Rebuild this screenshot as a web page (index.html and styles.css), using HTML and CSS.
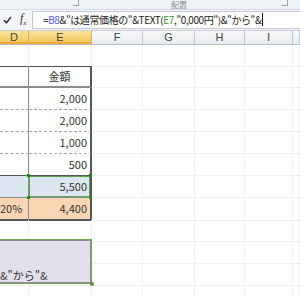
FILE: index.html
```html
<!DOCTYPE html>
<html lang="ja">
<head>
  <meta charset="UTF-8">
  <title>Excel TEXT関数</title>
  <link rel="stylesheet" href="styles.css">
</head>
<body>
<div class="window">
  <div class="ribbon">
    <span class="launcher launcher-left"></span>
    <span class="group-label">配置</span>
    <span class="launcher launcher-right"></span>
  </div>

  <div class="formula-bar">
    <div class="fx-buttons">
      <svg class="check" width="9" height="8" viewBox="0 0 9 8">
        <path d="M1 4.2 L3.4 6.8 L8 1" fill="none" stroke="#3a3a3a" stroke-width="1.6"/>
      </svg>
      <span class="fx">f<sub>x</sub></span>
    </div>
    <div class="formula-input">
      =<span class="ref-b">B8</span>&amp;"は通常価格の"&amp;TEXT(<span class="ref-e">E7</span>,"0,000円")&amp;"から"&amp;<span class="caret"></span>
    </div>
  </div>

  <div class="col-headers">
    <div class="col-head selected">D</div>
    <div class="col-head selected">E</div>
    <div class="col-head">F</div>
    <div class="col-head">G</div>
    <div class="col-head">H</div>
    <div class="col-head">I</div>
    <div class="col-head"></div>
  </div>

  <div class="sheet">
    <div class="row">
      <div class="cell"></div><div class="cell"></div><div class="cell"></div><div class="cell"></div><div class="cell"></div><div class="cell"></div><div class="cell"></div>
    </div>
    <div class="row t-head">
      <div class="cell d"></div><div class="cell e center">金額</div><div class="cell"></div><div class="cell"></div><div class="cell"></div><div class="cell"></div><div class="cell"></div>
    </div>
    <div class="row t-row">
      <div class="cell d"></div><div class="cell e">2,000</div><div class="cell"></div><div class="cell"></div><div class="cell"></div><div class="cell"></div><div class="cell"></div>
    </div>
    <div class="row t-row">
      <div class="cell d"></div><div class="cell e">2,000</div><div class="cell"></div><div class="cell"></div><div class="cell"></div><div class="cell"></div><div class="cell"></div>
    </div>
    <div class="row t-row">
      <div class="cell d"></div><div class="cell e">1,000</div><div class="cell"></div><div class="cell"></div><div class="cell"></div><div class="cell"></div><div class="cell"></div>
    </div>
    <div class="row t-row last">
      <div class="cell d"></div><div class="cell e">500</div><div class="cell"></div><div class="cell"></div><div class="cell"></div><div class="cell"></div><div class="cell"></div>
    </div>
    <div class="row t-total">
      <div class="cell d"></div><div class="cell e active">5,500<i class="h tl"></i><i class="h tr"></i><i class="h bl"></i><i class="h br"></i></div><div class="cell"></div><div class="cell"></div><div class="cell"></div><div class="cell"></div><div class="cell"></div>
    </div>
    <div class="row t-sale">
      <div class="cell d">20%</div><div class="cell e">4,400</div><div class="cell"></div><div class="cell"></div><div class="cell"></div><div class="cell"></div><div class="cell"></div>
    </div>
    <div class="row">
      <div class="cell"></div><div class="cell"></div><div class="cell"></div><div class="cell"></div><div class="cell"></div><div class="cell"></div><div class="cell"></div>
    </div>
    <div class="row">
      <div class="cell"></div><div class="cell"></div><div class="cell"></div><div class="cell"></div><div class="cell"></div><div class="cell"></div><div class="cell"></div>
    </div>
    <div class="row">
      <div class="cell"></div><div class="cell"></div><div class="cell"></div><div class="cell"></div><div class="cell"></div><div class="cell"></div><div class="cell"></div>
    </div>
    <div class="row">
      <div class="cell"></div><div class="cell"></div><div class="cell"></div><div class="cell"></div><div class="cell"></div><div class="cell"></div><div class="cell"></div>
    </div>

    <!-- テキストボックス (セルの上に重なる) -->
    <div class="textbox">
      <div class="textbox-inner">&amp;"から"&amp;</div>
      <i class="tb-handle"></i>
    </div>
  </div>
</div>
</body>
</html>
```

FILE: styles.css
```css
body {
  margin: 0;
  padding: 0;
  background: #fff;
  font-family: "Noto Sans CJK JP", "Liberation Sans", sans-serif;
  color: #222;
}

.window {
  width: 300px;
  height: 296px;
  overflow: hidden;
}

/* リボン下端 */
.ribbon {
  height: 9px;
  background: #eef1f5;
  border-bottom: 1px solid #d6dbe2;
  display: flex;
  align-items: flex-start;
  overflow: hidden;
}

.group-label {
  margin-left: 92px;
  font-size: 8px;
  line-height: 9px;
  color: #8a8f98;
}

.launcher {
  width: 5px;
  height: 5px;
  border-right: 1px solid #9aa0a8;
  border-bottom: 1px solid #9aa0a8;
}

.launcher-left {
  margin-left: 73px;
}

.launcher-right {
  margin-left: 95px;
}

/* 数式バー */
.formula-bar {
  height: 20px;
  display: flex;
  background: #f3f5f8;
  border-bottom: 1px solid #c9ced6;
}

.fx-buttons {
  width: 32px;
  display: flex;
  align-items: center;
  gap: 8px;
  padding-left: 3px;
  box-sizing: border-box;
}

.fx {
  font-family: "Liberation Serif", serif;
  font-style: italic;
  font-size: 12px;
  color: #333;
  line-height: 1;
}

.fx sub {
  font-size: 7px;
}

.formula-input {
  flex: 1;
  background: #fff;
  border: 1px solid #c4c9d0;
  border-right: none;
  margin: 1px 0;
  padding-left: 10px;
  font-size: 10px;
  line-height: 16px;
  white-space: nowrap;
  color: #222;
  letter-spacing: -0.4px;
}

.ref-b {
  color: #5555ff;
}

.ref-e {
  color: #3d9b35;
}

.caret {
  display: inline-block;
  width: 1px;
  height: 13px;
  margin-left: 1px;
  background: #000;
  vertical-align: -2px;
}

/* 列見出し */
.col-headers {
  display: grid;
  grid-template-columns: 29px 63px 51px 52px 50px 48px 1fr;
  height: 13px;
  background: linear-gradient(#f8f9fa, #e7eaee);
  border-bottom: 1px solid #b8bec6;
}

.col-head {
  border-right: 1px solid #c3c8cf;
  font-family: "Liberation Sans", sans-serif;
  font-size: 11px;
  line-height: 13px;
  text-align: center;
  color: #444;
}

.col-head.selected {
  background: linear-gradient(#fbe39a, #f3c862);
  border-bottom: 2px solid #f2a73a;
  border-right-color: #e2b25a;
  height: 11px;
}

/* シート */
.sheet {
  position: relative;
}

.row {
  display: grid;
  grid-template-columns: 29px 63px 51px 52px 50px 48px 1fr;
  height: 22px;
}

.cell {
  border-right: 1px solid #f1f1f1;
  border-bottom: 1px solid #f1f1f1;
  font-size: 11px;
  line-height: 21px;
  text-align: right;
  padding-right: 3px;
  white-space: nowrap;
  color: #333;
}

.cell.center {
  text-align: center;
  padding-right: 0;
}

.cell.d {
  border-right: 1px solid #8c8c8c;
}

.cell.e {
  border-right: 2px solid #555;
}

.t-head .cell.d,
.t-head .cell.e {
  border-top: 1px solid #555;
  border-bottom: 2px solid #8c8c8c;
  line-height: 19px;
}

.row.t-head {
  margin-top: -1px;
}

.t-row .cell.d,
.t-row .cell.e {
  border-bottom: 1px dashed #a8a8a8;
}

.t-row.last .cell.d,
.t-row.last .cell.e {
  border-bottom: 1px solid #555;
}

.t-total .cell.d,
.t-total .cell.e {
  background: #dce6f1;
  border-bottom: 1px solid #8c8c8c;
}

.t-sale .cell.d,
.t-sale .cell.e {
  background: #fcd5b4;
  border-bottom: 2px solid #555;
}

.t-sale .cell.d {
  padding-right: 8px;
}

/* アクティブセル */
.cell.active {
  position: relative;
  box-shadow: inset 0 0 0 1px #5fa14b;
}

.h {
  position: absolute;
  width: 3px;
  height: 3px;
  background: #1f8a1f;
}

.h.tl { left: -2px; top: -2px; }
.h.tr { right: -2px; top: -2px; }
.h.bl { left: -2px; bottom: -2px; }
.h.br { right: -2px; bottom: -2px; }

/* テキストボックス */
.textbox {
  position: absolute;
  left: -4px;
  top: 194px;
  width: 96px;
  height: 45px;
  border: 1px solid #7aa54a;
  box-sizing: border-box;
}

.textbox-inner {
  height: 100%;
  box-sizing: border-box;
  border: 1px solid #8a8a96;
  background: #e4dfec;
  font-size: 11px;
  line-height: 14px;
  padding: 27px 0 0 2px;
  color: #333;
}

.tb-handle {
  position: absolute;
  right: -3px;
  bottom: -3px;
  width: 4px;
  height: 4px;
  border-radius: 50%;
  background: #5b8a3a;
}
```
